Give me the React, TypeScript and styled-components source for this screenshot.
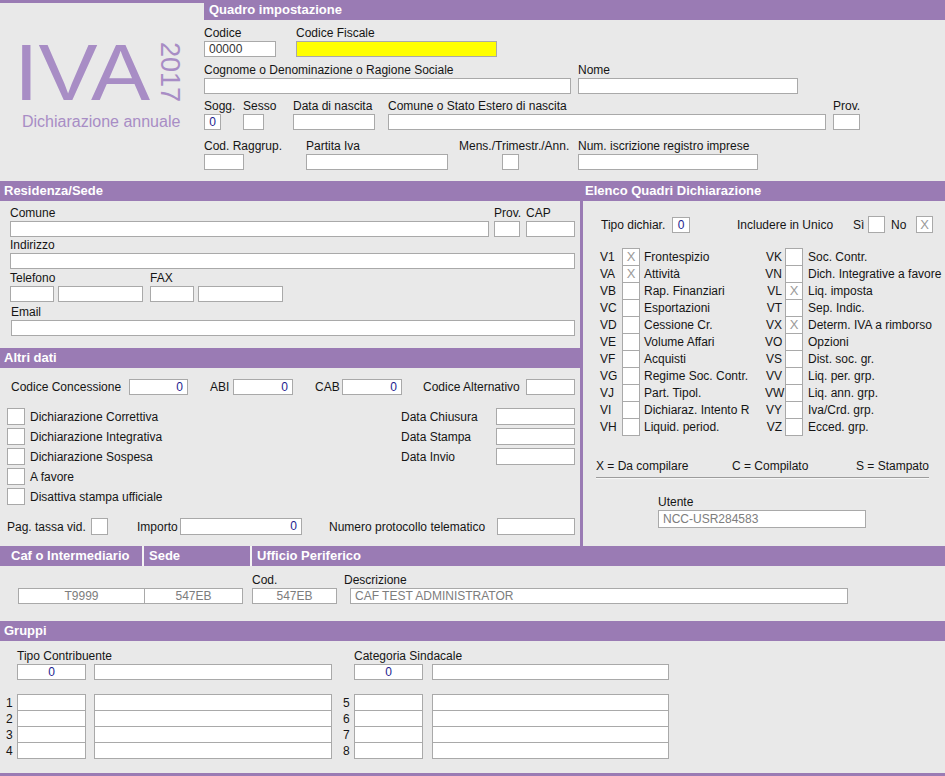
import React from 'react';
import styled, { createGlobalStyle } from 'styled-components';

const PURPLE = '#9a7bb4';
const LOGO = '#a88dc5';
const BORDER = '#a9a9a9';
const BLUE = '#1d1d8f';
const GRAY_TEXT = '#7d7d7d';
const BG = '#e9e9e9';

const GlobalStyle = createGlobalStyle`
  html, body { margin: 0; padding: 0; background: ${BG}; }
  * { box-sizing: border-box; }
`;

const Page = styled.div`
  width: 945px;
  height: 776px;
  overflow: hidden;
  background: ${BG};
  font-family: "Liberation Sans", Arial, sans-serif;
  font-size: 12px;
  color: #151515;
  display: flex;
  flex-direction: column;
`;

const Section = styled.div<{ $h?: number }>`
  flex: ${p => (p.$h ? 'none' : '1')};
  height: ${p => (p.$h ? `${p.$h}px` : 'auto')};
  display: flex;
  flex-direction: column;
`;

const Split = styled.div<{ $h: number }>`
  flex: none;
  height: ${p => p.$h}px;
  display: flex;
`;

const Column = styled.div<{ $w?: number }>`
  flex: ${p => (p.$w ? 'none' : '1')};
  width: ${p => (p.$w ? `${p.$w}px` : 'auto')};
  display: flex;
  flex-direction: column;
`;

const Divider = styled.div`
  flex: none;
  width: 3px;
  background: ${PURPLE};
`;

const Bar = styled.div<{ $pl?: number; $w?: number; $grow?: boolean }>`
  flex: ${p => (p.$grow ? '1' : 'none')};
  width: ${p => (p.$w ? `${p.$w}px` : 'auto')};
  height: 20px;
  line-height: 20px;
  background: ${PURPLE};
  color: #fff;
  font-weight: bold;
  font-size: 13px;
  padding-left: ${p => p.$pl ?? 4}px;
  white-space: nowrap;
`;

const BarRow = styled.div`
  display: flex;
  height: 20px;
`;

const BarGap = styled.div`
  flex: none;
  width: 2px;
  background: #f4f4f4;
`;

const Row = styled.div<{ $mt?: number; $ml?: number; $center?: boolean; $top?: boolean }>`
  display: flex;
  align-items: ${p => (p.$center ? 'center' : p.$top ? 'flex-start' : 'flex-end')};
  margin-top: ${p => p.$mt ?? 0}px;
  margin-left: ${p => p.$ml ?? 0}px;
`;

const Field = styled.div<{ $w?: number; $ml?: number }>`
  flex: none;
  display: flex;
  flex-direction: column;
  width: ${p => (p.$w ? `${p.$w}px` : 'auto')};
  margin-left: ${p => p.$ml ?? 0}px;
`;

const Pair = styled.div`
  display: flex;
`;

const Label = styled.div`
  height: 15px;
  line-height: 15px;
  white-space: nowrap;
`;

const Caption = styled.span<{ $w?: number; $ml?: number }>`
  flex: none;
  width: ${p => (p.$w ? `${p.$w}px` : 'auto')};
  margin-left: ${p => p.$ml ?? 0}px;
  white-space: nowrap;
`;

type Tone = 'blue' | 'gray';

const Input = styled.div<{
  $w: number;
  $h?: number;
  $ml?: number;
  $align?: 'left' | 'center' | 'right';
  $tone?: Tone;
  $yellow?: boolean;
}>`
  flex: none;
  width: ${p => p.$w}px;
  height: ${p => p.$h ?? 16}px;
  margin-left: ${p => p.$ml ?? 0}px;
  background: ${p => (p.$yellow ? '#ffff00' : '#fff')};
  border: 1px solid ${BORDER};
  padding: 0 4px;
  line-height: ${p => (p.$h ?? 16) - 2}px;
  text-align: ${p => p.$align ?? 'left'};
  color: ${p => (p.$tone === 'blue' ? BLUE : p.$tone === 'gray' ? GRAY_TEXT : '#333')};
  white-space: nowrap;
  overflow: hidden;
`;

const Check = styled.div<{ $w?: number; $h?: number }>`
  flex: none;
  width: ${p => p.$w ?? 17}px;
  height: ${p => p.$h ?? 17}px;
  background: #fff;
  border: 1px solid ${BORDER};
  color: #9a9a9a;
  font-size: 13px;
  line-height: ${p => (p.$h ?? 17) - 2}px;
  text-align: center;
`;

/* logo */
const Logo = styled.div`
  flex: none;
  width: 204px;
  border-top: 3px solid ${PURPLE};
  padding-top: 36px;
  color: ${LOGO};
`;

const LogoRow = styled.div`
  display: flex;
  align-items: flex-start;
  height: 72px;
  margin-left: 14px;
`;

const LogoMark = styled.div`
  font-size: 86px;
  line-height: 72px;
  height: 72px;
  transform: scale(1.03, 0.93);
  transform-origin: top left;
`;

const LogoYear = styled.div`
  writing-mode: vertical-rl;
  font-size: 27px;
  line-height: 27px;
  margin-left: 10px;
  margin-top: 3px;
`;

const LogoSub = styled.div`
  margin: 2px 0 0 22px;
  font-size: 16px;
  line-height: 18px;
  white-space: nowrap;
`;

/* quadri list */
const QGrid = styled.div`
  display: flex;
  margin: 15px 0 0 17px;
`;

const QCol = styled.div<{ $w?: number }>`
  flex: none;
  width: ${p => (p.$w ? `${p.$w}px` : 'auto')};
  display: flex;
  flex-direction: column;
`;

const QRow = styled.div`
  display: flex;
  align-items: flex-start;
  height: 17px;
  line-height: 18px;
`;

const QCode = styled.span<{ $w: number; $right?: boolean }>`
  flex: none;
  width: ${p => p.$w}px;
  text-align: ${p => (p.$right ? 'right' : 'left')};
  padding-right: ${p => (p.$right ? 3 : 0)}px;
`;

const QName = styled.span<{ $ml: number }>`
  margin-left: ${p => p.$ml}px;
  white-space: nowrap;
`;

const Legend = styled.div`
  display: flex;
  margin: 24px 0 0 13px;
  line-height: 14px;
`;

const Rule = styled.div`
  width: 333px;
  margin: 4px 0 0 13px;
  border-top: 1px solid #9c9c9c;
  border-bottom: 1px solid #f6f6f6;
`;

const CheckList = styled.div`
  flex: none;
  width: 394px;
  margin-left: 7px;
  display: flex;
  flex-direction: column;
  gap: 3px;
`;

const DateList = styled.div`
  display: flex;
  flex-direction: column;
  gap: 3px;
`;

const GroupRows = styled.div`
  margin: 14px 0 0 6px;
  display: flex;
  flex-direction: column;
`;

const GroupRow = styled.div`
  display: flex;
  align-items: flex-start;
  height: 16px;
  line-height: 18px;
`;

const BottomRule = styled.div`
  margin-top: auto;
  height: 3px;
  background: ${PURPLE};
`;

const leftQuadri: [string, string, boolean][] = [
  ['V1', 'Frontespizio', true],
  ['VA', 'Attività', true],
  ['VB', 'Rap. Finanziari', false],
  ['VC', 'Esportazioni', false],
  ['VD', 'Cessione Cr.', false],
  ['VE', 'Volume Affari', false],
  ['VF', 'Acquisti', false],
  ['VG', 'Regime Soc. Contr.', false],
  ['VJ', 'Part. Tipol.', false],
  ['VI', 'Dichiaraz. Intento R', false],
  ['VH', 'Liquid. period.', false],
];

const rightQuadri: [string, string, boolean][] = [
  ['VK', 'Soc. Contr.', false],
  ['VN', 'Dich. Integrative a favore', false],
  ['VL', 'Liq. imposta', true],
  ['VT', 'Sep. Indic.', false],
  ['VX', 'Determ. IVA a rimborso', true],
  ['VO', 'Opzioni', false],
  ['VS', 'Dist. soc. gr.', false],
  ['VV', 'Liq. per. grp.', false],
  ['VW', 'Liq. ann. grp.', false],
  ['VY', 'Iva/Crd. grp.', false],
  ['VZ', 'Ecced. grp.', false],
];

const flags = [
  'Dichiarazione Correttiva',
  'Dichiarazione Integrativa',
  'Dichiarazione Sospesa',
  'A favore',
  'Disattiva stampa ufficiale',
];

const dates = ['Data Chiusura', 'Data Stampa', 'Data Invio'];

export default function App() {
  return (
    <Page>
      <GlobalStyle />

      <Split $h={181}>
        <Logo>
          <LogoRow>
            <LogoMark>IVA</LogoMark>
            <LogoYear>2017</LogoYear>
          </LogoRow>
          <LogoSub>Dichiarazione annuale</LogoSub>
        </Logo>
        <Column>
          <Bar $pl={5}>Quadro impostazione</Bar>
          <Row $mt={6}>
            <Field $w={92}>
              <Label>Codice</Label>
              <Input $w={72}>00000</Input>
            </Field>
            <Field>
              <Label>Codice Fiscale</Label>
              <Input $w={201} $yellow />
            </Field>
          </Row>
          <Row $mt={6}>
            <Field $w={374}>
              <Label>Cognome o Denominazione o Ragione Sociale</Label>
              <Input $w={367} />
            </Field>
            <Field>
              <Label>Nome</Label>
              <Input $w={220} />
            </Field>
          </Row>
          <Row $mt={5}>
            <Field $w={39}>
              <Label>Sogg.</Label>
              <Input $w={17} $align="center" $tone="blue">0</Input>
            </Field>
            <Field $w={50}>
              <Label>Sesso</Label>
              <Input $w={21} />
            </Field>
            <Field $w={95}>
              <Label>Data di nascita</Label>
              <Input $w={82} />
            </Field>
            <Field $w={445}>
              <Label>Comune o Stato Estero di nascita</Label>
              <Input $w={438} />
            </Field>
            <Field>
              <Label>Prov.</Label>
              <Input $w={27} />
            </Field>
          </Row>
          <Row $mt={9}>
            <Field $w={102}>
              <Label>Cod. Raggrup.</Label>
              <Input $w={40} />
            </Field>
            <Field $w={153}>
              <Label>Partita Iva</Label>
              <Input $w={142} />
            </Field>
            <Field $w={119}>
              <Label>Mens./Trimestr./Ann.</Label>
              <Input $w={17} $ml={43} />
            </Field>
            <Field>
              <Label>Num. iscrizione registro imprese</Label>
              <Input $w={180} />
            </Field>
          </Row>
        </Column>
      </Split>

      <Split $h={365}>
        <Column $w={580}>
          <Section $h={167}>
            <Bar>Residenza/Sede</Bar>
            <Row $mt={5} $ml={10}>
              <Field $w={484}>
                <Label>Comune</Label>
                <Input $w={479} />
              </Field>
              <Field $w={32}>
                <Label>Prov.</Label>
                <Input $w={26} />
              </Field>
              <Field>
                <Label>CAP</Label>
                <Input $w={49} />
              </Field>
            </Row>
            <Row $mt={1} $ml={10}>
              <Field>
                <Label>Indirizzo</Label>
                <Input $w={565} />
              </Field>
            </Row>
            <Row $mt={2} $ml={10}>
              <Field $w={140}>
                <Label>Telefono</Label>
                <Pair>
                  <Input $w={44} />
                  <Input $w={85} $ml={4} />
                </Pair>
              </Field>
              <Field>
                <Label>FAX</Label>
                <Pair>
                  <Input $w={44} />
                  <Input $w={85} $ml={4} />
                </Pair>
              </Field>
            </Row>
            <Row $mt={3} $ml={11}>
              <Field>
                <Label>Email</Label>
                <Input $w={564} />
              </Field>
            </Row>
          </Section>

          <Section $h={198}>
            <Bar>Altri dati</Bar>
            <Row $mt={11} $ml={11} $center>
              <Caption $w={118}>Codice Concessione</Caption>
              <Input $w={59} $align="right" $tone="blue">0</Input>
              <Caption $w={23} $ml={22}>ABI</Caption>
              <Input $w={60} $align="right" $tone="blue">0</Input>
              <Caption $w={27} $ml={22}>CAB</Caption>
              <Input $w={60} $align="right" $tone="blue">0</Input>
              <Caption $w={103} $ml={21}>Codice Alternativo</Caption>
              <Input $w={49} />
            </Row>
            <Row $mt={13} $top>
              <CheckList>
                {flags.map(f => (
                  <Row key={f} $center>
                    <Check $w={18} />
                    <Caption $ml={5}>{f}</Caption>
                  </Row>
                ))}
              </CheckList>
              <DateList>
                {dates.map(d => (
                  <Row key={d} $center>
                    <Caption $w={95}>{d}</Caption>
                    <Input $w={79} $h={17} />
                  </Row>
                ))}
              </DateList>
            </Row>
            <Row $mt={13} $ml={7} $center>
              <Caption $w={84}>Pag. tassa vid.</Caption>
              <Check />
              <Caption $w={43} $ml={29}>Importo</Caption>
              <Input $w={122} $h={17} $align="right" $tone="blue">0</Input>
              <Caption $w={168} $ml={27}>Numero protocollo telematico</Caption>
              <Input $w={78} $h={17} />
            </Row>
          </Section>
        </Column>

        <Divider />

        <Column>
          <Bar $pl={2}>Elenco Quadri Dichiarazione</Bar>
          <Row $mt={15} $ml={18} $center>
            <Caption $w={71}>Tipo dichiar.</Caption>
            <Input $w={18} $align="center" $tone="blue" style={{ padding: 0 }}>0</Input>
            <Caption $w={116} $ml={47}>Includere in Unico</Caption>
            <Caption $w={15}>Sì</Caption>
            <Check />
            <Caption $w={25} $ml={6}>No</Caption>
            <Check>X</Check>
          </Row>
          <QGrid>
            <QCol $w={165}>
              {leftQuadri.map(([code, name, on]) => (
                <QRow key={code}>
                  <QCode $w={22}>{code}</QCode>
                  <Check $w={18} $h={18}>{on ? 'X' : ''}</Check>
                  <QName $ml={4}>{name}</QName>
                </QRow>
              ))}
            </QCol>
            <QCol>
              {rightQuadri.map(([code, name, on]) => (
                <QRow key={code}>
                  <QCode $w={20} $right>{code}</QCode>
                  <Check $w={18} $h={18}>{on ? 'X' : ''}</Check>
                  <QName $ml={5}>{name}</QName>
                </QRow>
              ))}
            </QCol>
          </QGrid>
          <Legend>
            <Caption $w={136}>X = Da compilare</Caption>
            <Caption $w={124}>C = Compilato</Caption>
            <Caption>S = Stampato</Caption>
          </Legend>
          <Rule />
          <Row $mt={16} $ml={75}>
            <Field>
              <Label>Utente</Label>
              <Input $w={208} $h={18} $tone="gray">NCC-USR284583</Input>
            </Field>
          </Row>
        </Column>
      </Split>

      <Section $h={75}>
        <BarRow>
          <Bar $w={142} $pl={11}>Caf o Intermediario</Bar>
          <BarGap />
          <Bar $w={106} $pl={5}>Sede</Bar>
          <BarGap />
          <Bar $grow $pl={5}>Ufficio Periferico</Bar>
        </BarRow>
        <Row $mt={7} $ml={18}>
          <Input $w={127} $align="center" $tone="gray">T9999</Input>
          <Input $w={99} $ml={-1} $align="center" $tone="gray">547EB</Input>
          <Field $ml={9}>
            <Label>Cod.</Label>
            <Input $w={85} $align="center" $tone="gray">547EB</Input>
          </Field>
          <Field $ml={7}>
            <Label>Descrizione</Label>
            <Input $w={498} $ml={6} $tone="gray">CAF TEST ADMINISTRATOR</Input>
          </Field>
        </Row>
      </Section>

      <Section>
        <Bar>Gruppi</Bar>
        <Row $mt={8} $ml={17}>
          <Field $w={69}>
            <Label>Tipo Contribuente</Label>
            <Input $w={69} $align="center" $tone="blue">0</Input>
          </Field>
          <Input $w={238} $ml={8} />
          <Field $w={69} $ml={22}>
            <Label>Categoria Sindacale</Label>
            <Input $w={69} $align="center" $tone="blue">0</Input>
          </Field>
          <Input $w={237} $ml={9} />
        </Row>
        <GroupRows>
          {[1, 2, 3, 4].map(n => (
            <GroupRow key={n}>
              <Caption $w={11}>{n}</Caption>
              <Input $w={69} $h={17} />
              <Input $w={238} $h={17} $ml={8} />
              <Caption $w={11} $ml={11}>{n + 4}</Caption>
              <Input $w={69} $h={17} />
              <Input $w={237} $h={17} $ml={9} />
            </GroupRow>
          ))}
        </GroupRows>
        <BottomRule />
      </Section>
    </Page>
  );
}
